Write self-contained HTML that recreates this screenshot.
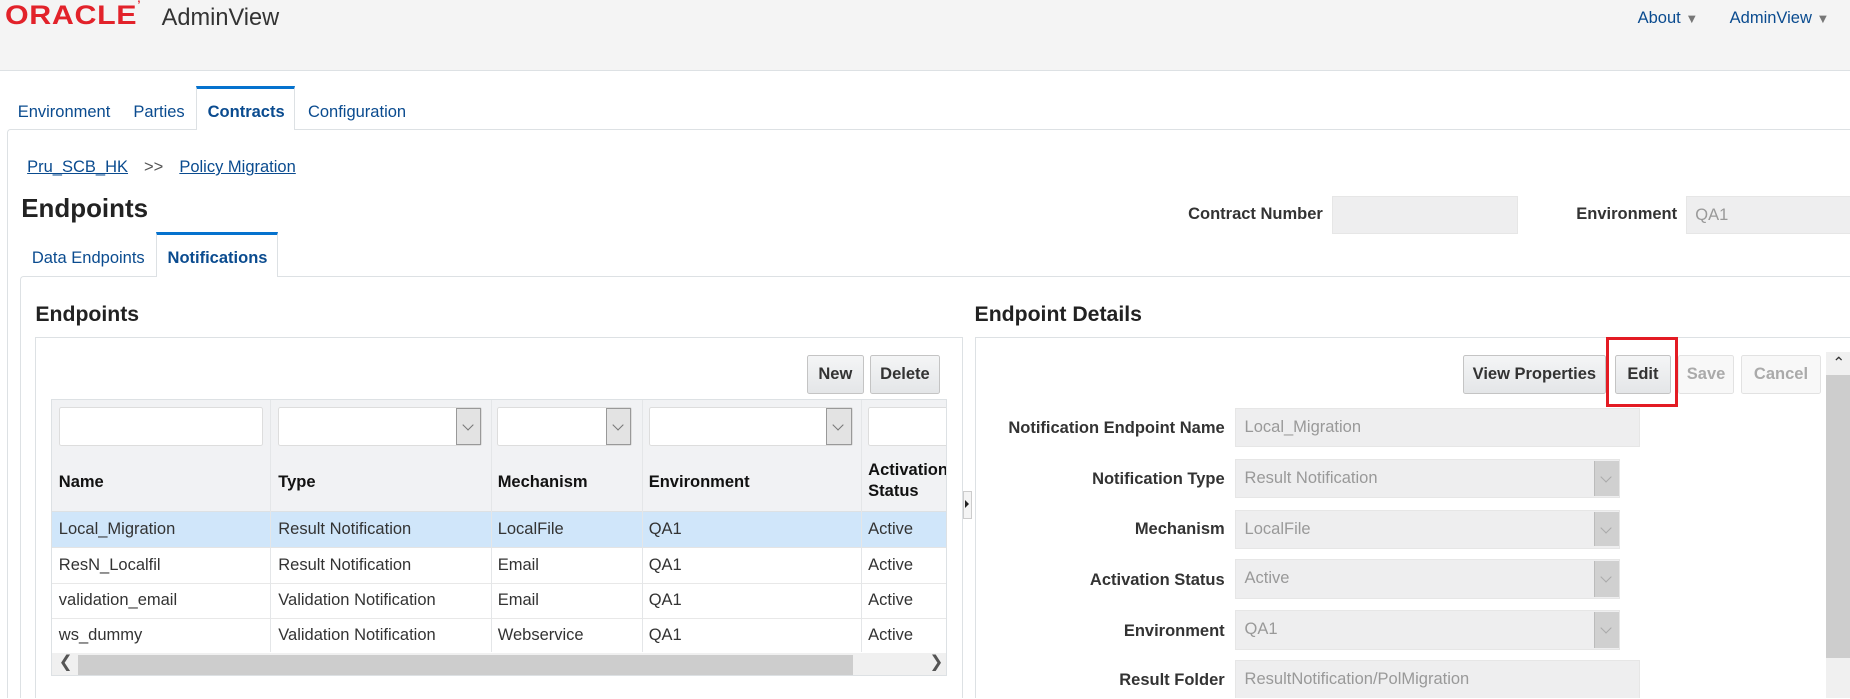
<!DOCTYPE html>
<html><head><meta charset="utf-8"><style>
html,body{margin:0;padding:0;overflow:hidden}
body{width:1568px;height:592px;zoom:1.17985;position:relative;font-family:"Liberation Sans",Arial,sans-serif;font-size:14px;color:#333;background:#fff;overflow:hidden}
#w{position:absolute;left:0;top:0;width:1568px;height:592px;overflow:hidden}
.a{position:absolute;white-space:nowrap}
.lnk{color:#0a4b8f}
.b{font-weight:bold}
.inp{position:absolute;background:#eeeeef;border:1px solid #e6e6e6;box-sizing:border-box;color:#999;font-size:14px;padding-left:7px;line-height:31px}
.sel .arr{position:absolute;right:0;top:1px;bottom:1px;width:20px;background:#d0d0d0;border-left:1px solid #bbb}
.fi{position:absolute;border:1px solid #ddd;background:#fff;box-sizing:border-box;height:33px;border-radius:2px}
.fi .arr{position:absolute;right:0;top:0;bottom:0;width:20px;background:#e3e3e3;border:1px solid #999}
.chev{position:absolute;left:6px;top:10px;width:6px;height:6px;border-right:1px solid #777;border-bottom:1px solid #777;transform:rotate(45deg)}
.btn{position:absolute;height:33px;box-sizing:border-box;border:1px solid #c4c4c4;border-radius:2px;background:linear-gradient(#f4f5f6,#e4e6e8);font-weight:bold;color:#333;text-align:center;line-height:31px;font-size:14px}
.dis{color:#aaa;background:#f8f8f8;border-color:#e2e2e2}
.lbl{position:absolute;right:530px;font-weight:bold;text-align:right;white-space:nowrap}
</style></head><body><div id="w">
<div class="a" style="left:0;top:0;width:1568px;height:59px;background:#f4f4f4;border-bottom:1px solid #dde1e4"></div>
<div class="a" style="left:4px;top:-1px;font-size:23px;font-weight:bold;color:#e2222a;letter-spacing:0.5px;transform:scaleX(1.12);transform-origin:left top">ORACLE<span style="font-size:9px;vertical-align:top">&#8217;</span></div>
<div class="a" style="left:137px;top:3px;font-size:20px;color:#333">AdminView</div>
<div class="a lnk" style="left:1388px;top:8px">About <span style="color:#777;font-size:11px">▼</span></div>
<div class="a lnk" style="left:1466px;top:8px">AdminView <span style="color:#777;font-size:11px">▼</span></div>
<div class="a" style="left:6px;top:109px;width:1570px;height:500px;border-top:1px solid #dde1e4;border-left:1px solid #dde1e4;border-radius:3px 0 0 0"></div>
<div class="a" style="left:166px;top:73px;width:84px;height:37px;background:#fff;border:1px solid #dde1e4;border-top:3px solid #0572ce;border-bottom:none;box-sizing:border-box"></div>
<div class="a lnk" style="left:15px;top:87px">Environment</div>
<div class="a lnk" style="left:113px;top:87px">Parties</div>
<div class="a lnk b" style="left:176px;top:87px">Contracts</div>
<div class="a lnk" style="left:261px;top:87px">Configuration</div>
<div class="a lnk" style="left:23px;top:134px;text-decoration:underline">Pru_SCB_HK</div>
<div class="a" style="left:122px;top:134px;color:#555">&gt;&gt;</div>
<div class="a lnk" style="left:152px;top:134px;text-decoration:underline">Policy Migration</div>
<div class="a b" style="left:18px;top:165px;font-size:22px;color:#222">Endpoints</div>
<div class="a b" style="left:1007px;top:174px">Contract Number</div>
<div class="inp" style="left:1129px;top:166px;width:158px;height:32px"></div>
<div class="a b" style="left:1336px;top:174px">Environment</div>
<div class="inp" style="left:1429px;top:166px;width:150px;height:32px">QA1</div>
<div class="a" style="left:17px;top:234px;width:1570px;height:500px;border-top:1px solid #dde1e4;border-left:1px solid #dde1e4;border-radius:3px 0 0 0"></div>
<div class="a" style="left:132px;top:197px;width:104px;height:38px;background:#fff;border:1px solid #dde1e4;border-top:3px solid #0572ce;border-bottom:none;box-sizing:border-box"></div>
<div class="a lnk" style="left:27px;top:211px">Data Endpoints</div>
<div class="a lnk b" style="left:142px;top:211px">Notifications</div>
<div class="a b" style="left:30px;top:257px;font-size:18px;color:#222">Endpoints</div>
<div class="a b" style="left:826px;top:257px;font-size:18px;color:#222">Endpoint Details</div>
<div class="a" style="left:30px;top:286px;width:786px;height:320px;border:1px solid #dde1e4;box-sizing:border-box"></div>
<div class="btn" style="left:684px;top:301px;width:48px">New</div>
<div class="btn" style="left:737px;top:301px;width:60px">Delete</div>
<div class="a" style="left:43px;top:338px;width:760px;height:235px;border:1px solid #dde1e4;box-sizing:border-box;overflow:hidden">
 <div class="a" style="left:0;top:0;width:760px;height:44px;background:#f1f2f4;border-bottom:1px solid #dde1e4"></div>
 <div class="a" style="left:0;top:44px;width:760px;height:50px;background:#f1f2f4;border-bottom:1px solid #dde1e4"></div>
 <div class="a" style="left:0;top:95px;width:760px;height:30px;background:#d0e6fa;border-bottom:1px solid #e4e4e4"></div>
 <div class="a" style="left:0;top:125px;width:760px;height:30px;border-bottom:1px solid #e8e8e8"></div>
 <div class="a" style="left:0;top:155px;width:760px;height:30px;border-bottom:1px solid #e8e8e8"></div>
 <div class="a" style="left:185px;top:0;height:214px;border-left:1px solid #e4e6e8"></div>
 <div class="a" style="left:372px;top:0;height:214px;border-left:1px solid #e4e6e8"></div>
 <div class="a" style="left:500px;top:0;height:214px;border-left:1px solid #e4e6e8"></div>
 <div class="a" style="left:686px;top:0;height:214px;border-left:1px solid #e4e6e8"></div>
 <div class="fi" style="left:6px;top:6px;width:173px"></div>
 <div class="fi" style="left:192px;top:6px;width:173px"><div class="arr"><div class="chev"></div></div></div>
 <div class="fi" style="left:377px;top:6px;width:115px"><div class="arr"><div class="chev"></div></div></div>
 <div class="fi" style="left:506px;top:6px;width:173px"><div class="arr"><div class="chev"></div></div></div>
 <div class="fi" style="left:692px;top:6px;width:80px"></div>
 <div class="a b" style="left:6px;top:62px;color:#111">Name</div>
 <div class="a b" style="left:192px;top:62px;color:#111">Type</div>
 <div class="a b" style="left:378px;top:62px;color:#111">Mechanism</div>
 <div class="a b" style="left:506px;top:62px;color:#111">Environment</div>
 <div class="a b" style="left:692px;top:51px;color:#111;line-height:18px">Activation<br>Status</div>
 <div class="a" style="left:6px;top:102px">Local_Migration</div><div class="a" style="left:192px;top:102px">Result Notification</div><div class="a" style="left:378px;top:102px">LocalFile</div><div class="a" style="left:506px;top:102px">QA1</div><div class="a" style="left:692px;top:102px">Active</div>
 <div class="a" style="left:6px;top:132px">ResN_Localfil</div><div class="a" style="left:192px;top:132px">Result Notification</div><div class="a" style="left:378px;top:132px">Email</div><div class="a" style="left:506px;top:132px">QA1</div><div class="a" style="left:692px;top:132px">Active</div>
 <div class="a" style="left:6px;top:162px">validation_email</div><div class="a" style="left:192px;top:162px">Validation Notification</div><div class="a" style="left:378px;top:162px">Email</div><div class="a" style="left:506px;top:162px">QA1</div><div class="a" style="left:692px;top:162px">Active</div>
 <div class="a" style="left:6px;top:192px">ws_dummy</div><div class="a" style="left:192px;top:192px">Validation Notification</div><div class="a" style="left:378px;top:192px">Webservice</div><div class="a" style="left:506px;top:192px">QA1</div><div class="a" style="left:692px;top:192px">Active</div>
 <div class="a" style="left:0;top:215px;width:760px;height:20px;background:#f0f0f0"></div>
 <div class="a" style="left:22px;top:216px;width:657px;height:18px;background:#cdcdcd"></div>
 <div class="a" style="left:6px;top:214px;font-size:14px;color:#555">&#10094;</div>
 <div class="a" style="left:744px;top:214px;font-size:14px;color:#555">&#10095;</div>
</div>
<div class="a" style="left:816px;top:416px;width:8px;height:24px;border:1px solid #ccc;background:#f4f4f4;box-sizing:border-box"></div>
<div class="a" style="left:818px;top:424px;width:0;height:0;border-left:4px solid #222;border-top:4px solid transparent;border-bottom:4px solid transparent"></div>
<div class="a" style="left:826px;top:286px;width:760px;height:320px;border:1px solid #dde1e4;box-sizing:border-box"></div>
<div class="btn" style="left:1240px;top:301px;width:121px">View Properties</div>
<div class="btn" style="left:1369px;top:301px;width:47px">Edit</div>
<div class="a" style="left:1361px;top:286px;width:61px;height:59px;border:3px solid #e31b23;box-sizing:border-box"></div>
<div class="btn dis" style="left:1422px;top:301px;width:48px">Save</div>
<div class="btn dis" style="left:1476px;top:301px;width:67px">Cancel</div>
<div class="a" style="left:1548px;top:298px;width:20px;height:300px;background:#f0f0f0"></div>
<div class="a" style="left:1548px;top:318px;width:20px;height:240px;background:#cdcdcd"></div>
<div class="a" style="left:1553px;top:300px;font-size:13px;color:#333">&#8963;</div>
<div class="lbl" style="top:355px">Notification Endpoint Name</div>
<div class="inp" style="left:1047px;top:346px;width:343px;height:33px">Local_Migration</div>
<div class="lbl" style="top:398px">Notification Type</div>
<div class="inp sel" style="left:1047px;top:389px;width:326px;height:33px">Result Notification<div class="arr"><div class="chev" style="border-color:#aaa"></div></div></div>
<div class="lbl" style="top:441px">Mechanism</div>
<div class="inp sel" style="left:1047px;top:432px;width:326px;height:33px">LocalFile<div class="arr"><div class="chev" style="border-color:#aaa"></div></div></div>
<div class="lbl" style="top:484px">Activation Status</div>
<div class="inp sel" style="left:1047px;top:474px;width:326px;height:34px">Active<div class="arr"><div class="chev" style="border-color:#aaa"></div></div></div>
<div class="lbl" style="top:527px">Environment</div>
<div class="inp sel" style="left:1047px;top:517px;width:326px;height:34px">QA1<div class="arr"><div class="chev" style="border-color:#aaa"></div></div></div>
<div class="lbl" style="top:569px">Result Folder</div>
<div class="inp" style="left:1047px;top:559px;width:343px;height:34px">ResultNotification/PolMigration</div>
</div></body></html>
